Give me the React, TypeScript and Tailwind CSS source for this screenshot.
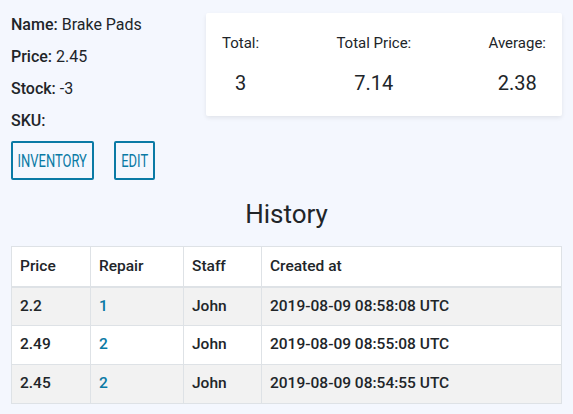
const rows = [
  { price: "2.2", repair: "1", staff: "John", created: "2019-08-09 08:58:08 UTC", striped: true },
  { price: "2.49", repair: "2", staff: "John", created: "2019-08-09 08:55:08 UTC", striped: false },
  { price: "2.45", repair: "2", staff: "John", created: "2019-08-09 08:54:55 UTC", striped: true },
];

const stats = [
  { label: "Total:", value: "3" },
  { label: "Total Price:", value: "7.14" },
  { label: "Average:", value: "2.38" },
];

export default function App() {
  return (
    <div className="min-h-[414px] w-[573px] bg-[#f4f7fe] font-['Roboto',sans-serif] text-[#212529]">
      <div className="flex justify-between pl-[11px] pr-3 pt-[13px]">
        {/* ── Item details ── */}
        <div className="flex flex-col">
          <div className="flex h-[32px] -mt-[4px] items-center text-[16px]">
            <span className="font-medium">Name:</span>&nbsp;Brake Pads
          </div>
          <div className="flex h-[32px] items-center text-[16px]">
            <span className="font-medium">Price:</span>&nbsp;2.45
          </div>
          <div className="flex h-[32px] items-center text-[16px]">
            <span className="font-medium">Stock:</span>&nbsp;-3
          </div>
          <div className="flex h-[32px] items-center text-[16px]">
            <span className="font-medium">SKU:</span>
          </div>
          <div className="mt-[4px] flex gap-[20px]">
            <button
              type="button"
              className="flex h-[39px] w-[83px] items-center justify-center rounded-[2px] border-2 border-[#0a7aa5] text-[18px] text-[#0a7aa5]"
            >
              <span className="inline-block scale-x-[0.72]">INVENTORY</span>
            </button>
            <button
              type="button"
              className="flex h-[39px] w-[41px] items-center justify-center rounded-[2px] border-2 border-[#0a7aa5] text-[18px] text-[#0a7aa5]"
            >
              <span className="inline-block scale-x-[0.72]">EDIT</span>
            </button>
          </div>
        </div>

        {/* ── Stats card ── */}
        <div className="flex h-[103px] w-[356px] justify-between rounded-[2px] bg-white px-4 pt-[20px] shadow-[0_2px_4px_rgba(0,0,0,0.08)] -mr-[1px]">
          {stats.map((s) => (
            <div key={s.label} className="flex flex-col items-center">
              <div className="text-[15px] leading-[20px]">{s.label}</div>
              <div className="mt-[18px] text-[20px] leading-[24px]">{s.value}</div>
            </div>
          ))}
        </div>
      </div>

      {/* ── History ── */}
      <h2 className="mt-[18px] text-center text-[26px] leading-[32px]">History</h2>

      <div className="px-[11px] pt-[16px]">
        <table className="w-full border-collapse border border-[#dee2e6] text-[15.5px]">
          <thead>
            <tr className="bg-white">
              <th className="h-[40px] w-[79px] border border-b-2 border-[#dee2e6] px-2 text-left font-medium">Price</th>
              <th className="h-[40px] w-[93px] border border-b-2 border-[#dee2e6] px-2 text-left font-medium">Repair</th>
              <th className="h-[40px] w-[78px] border border-b-2 border-[#dee2e6] px-2 text-left font-medium">Staff</th>
              <th className="h-[40px] border border-b-2 border-[#dee2e6] px-2 text-left font-medium">Created at</th>
            </tr>
          </thead>
          <tbody>
            {rows.map((r, i) => (
              <tr key={i} className={r.striped ? "bg-[#f2f2f2]" : "bg-white"}>
                <td className="h-[39px] border border-[#dee2e6] px-2 font-medium">{r.price}</td>
                <td className="h-[39px] border border-[#dee2e6] px-2 font-medium text-[#0a7aa5]">{r.repair}</td>
                <td className="h-[39px] border border-[#dee2e6] px-2 font-medium">{r.staff}</td>
                <td className="h-[39px] border border-[#dee2e6] px-2 font-medium">{r.created}</td>
              </tr>
            ))}
          </tbody>
        </table>
      </div>
    </div>
  );
}
